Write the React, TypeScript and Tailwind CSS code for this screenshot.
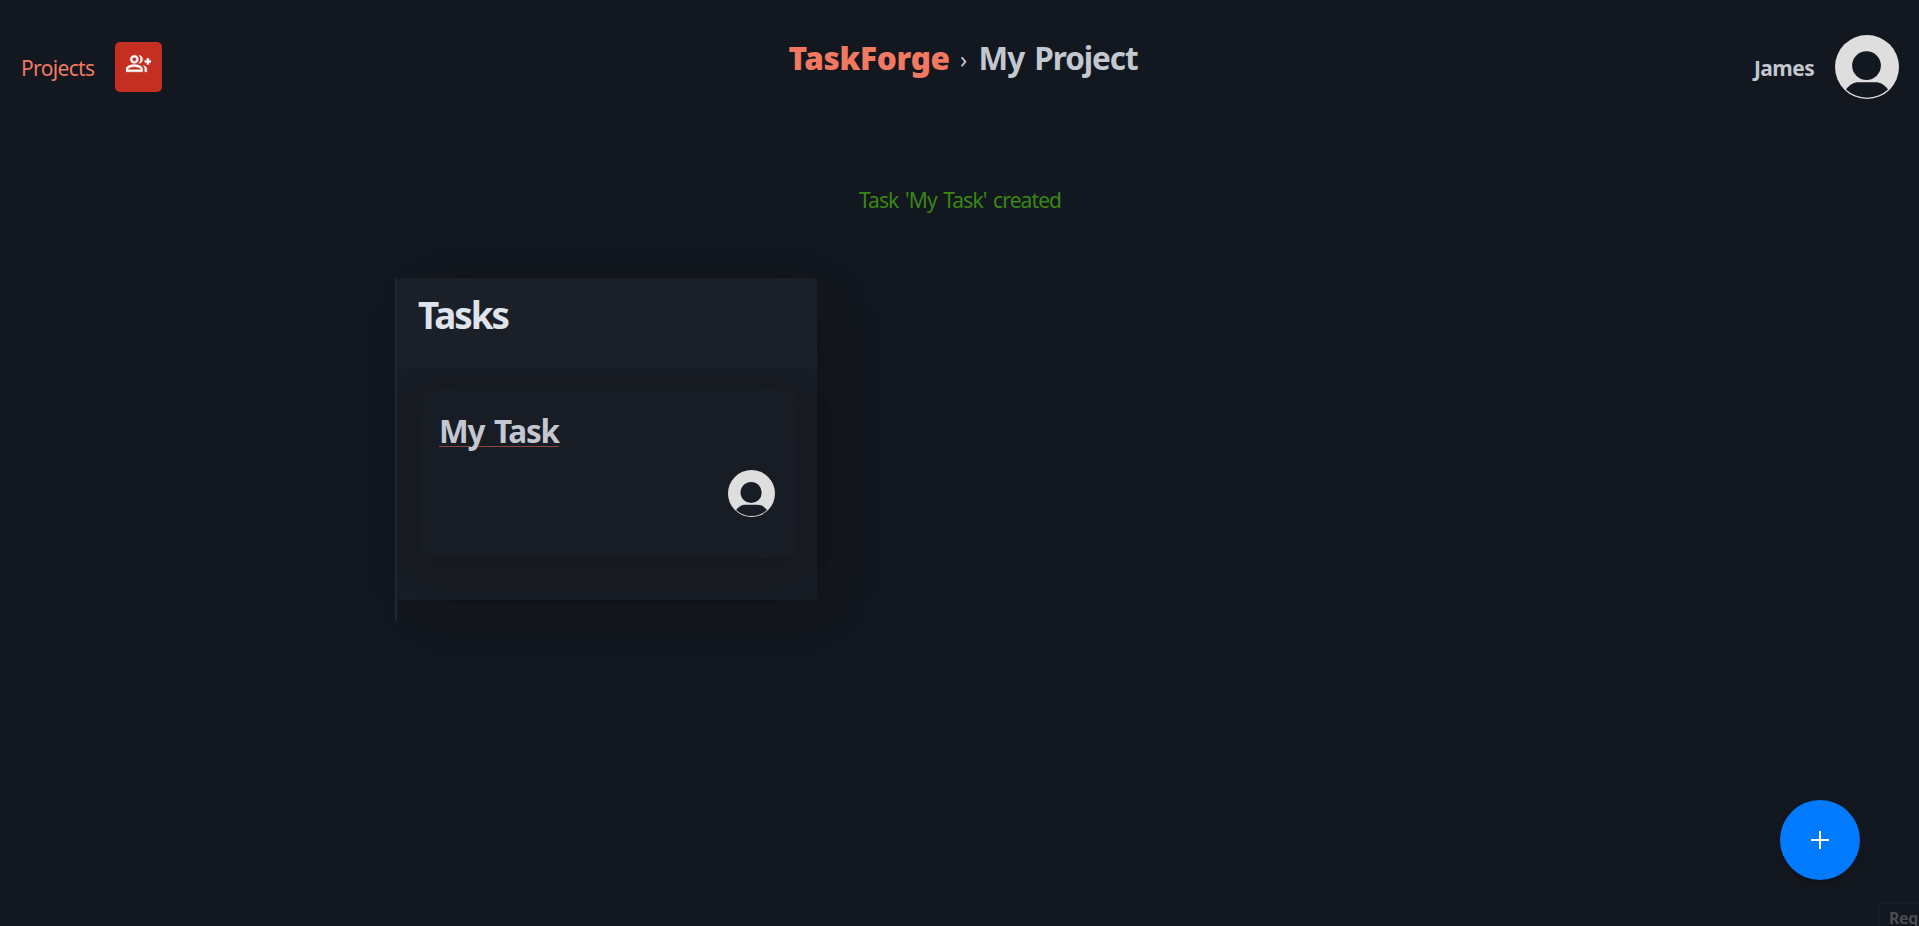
import React from "react";
import { MdOutlineGroupAdd } from "react-icons/md";

function Avatar({ className, color }: { className: string; color: string }) {
  return (
    <svg viewBox="0 0 64 64" className={className} aria-hidden="true">
      <circle cx="32" cy="32" r="32" fill="#dedede" />
      <circle cx="31.5" cy="30.6" r="14.4" fill={color} />
      <path d="M11 54.5C14.5 50 18 47.3 24 47.3H40C46 47.3 49.5 50 53 54.5A31 31 0 0 1 11 54.5Z" fill={color} />
    </svg>
  );
}

function Header() {
  return (
    <header className="flex h-[135px] justify-between pl-[21px] pr-[20px]">
      <div className="flex flex-1 items-start gap-[21px]">
        <span className="mt-[52px] w-[73px] whitespace-nowrap leading-[32px] tracking-[-0.65px] text-[#f17961]">Projects</span>
        <button className="mt-[42px] flex h-[50px] w-[47px] justify-center rounded-[5px] bg-[#c52f21] pt-[9px] text-white">
          <MdOutlineGroupAdd size={25} className="[&>path]:[stroke-width:0.35px] [&>path[fill=none]]:stroke-none" stroke="currentColor" />
        </button>
      </div>
      <div className="flex items-start justify-center pl-[7px] pt-[36px] leading-[44px]">
        <strong className="w-[160px] whitespace-nowrap text-[31.5px] font-black tracking-[-0.3px] text-[#f17961]">TaskForge</strong>
        <span className="w-[30px] pt-px text-center text-[23px] text-[#c2c7d0]">›</span>
        <h1 className="w-[160px] whitespace-nowrap text-[31.5px] font-bold tracking-[-1.05px] text-[#c2c7d0] [word-spacing:3px]">My Project</h1>
      </div>
      <div className="flex flex-1 items-start justify-end">
        <strong className="mr-[20px] mt-[52px] w-[61px] whitespace-nowrap font-bold leading-[32px] tracking-[-0.6px] text-[#c2c7d0]">James</strong>
        <Avatar className="mt-[35px] size-[64px]" color="#13171f" />
      </div>
    </header>
  );
}

function TaskCard() {
  return (
    <article className="mx-[21px] mt-[21px] flex h-[169px] flex-col rounded-[5px] bg-[#181c24] px-[21px] pt-[20px] shadow-[2px_10px_36px_-8px_rgba(18,18,22,0.45)]">
      <h3 className="whitespace-nowrap text-[31.5px] font-bold leading-[44px] tracking-[-1.3px] text-[#c2c7d0] [word-spacing:3px]">
        <span className="underline decoration-[#8f433a] decoration-1 underline-offset-[3px]">My Task</span>
      </h3>
      <Avatar className="mt-[16.5px] size-[47px] self-end" color="#181c25" />
    </article>
  );
}

export default function App() {
  return (
    <div className="flex h-[926px] flex-col overflow-hidden bg-[#13171f] font-['Noto_Sans',sans-serif] text-[21px]">
      <Header />
      <p className="mt-[49px] h-[32px] pl-px text-center leading-[32px] tracking-[-0.9px] text-[#398712] [word-spacing:2px]">Task 'My Task' created</p>
      <main className="ml-[395px] mt-[62px] flex h-[343px] w-[422px] items-start">
        <section className="order-2 h-[322px] flex-1 rounded-[5px] bg-[#181c24] shadow-[17px_13px_44px_-16px_rgba(16,18,20,0.65)]">
          <h2 className="h-[90px] rounded-t-[5px] bg-[#1b1f28] pl-[21px] pt-[15px] text-[36.75px] font-bold leading-[44px] tracking-[-2px] text-[#dfe3eb]">Tasks</h2>
          <TaskCard />
        </section>
        <div className="z-10 order-1 h-full w-[2px] bg-[#202632]" />
      </main>
      <button className="fixed left-[1780px] top-[800px] flex size-[80px] items-center justify-center rounded-full bg-[#007bff] shadow-[0_4px_6px_rgba(0,0,0,0.2)]">
        <svg viewBox="0 0 18 18" className="size-[18px]" stroke="#fff" strokeWidth="2"><path d="M9 0V18M0 9H18" /></svg>
      </button>
      <div className="fixed left-[1878px] top-[902px] h-[24px] w-[41px] overflow-hidden border-l-2 border-t-2 border-[#171b24] pl-[9px] text-[16px] font-bold leading-[28px] tracking-[-0.4px] text-[#4a4d55]">Req</div>
    </div>
  );
}
